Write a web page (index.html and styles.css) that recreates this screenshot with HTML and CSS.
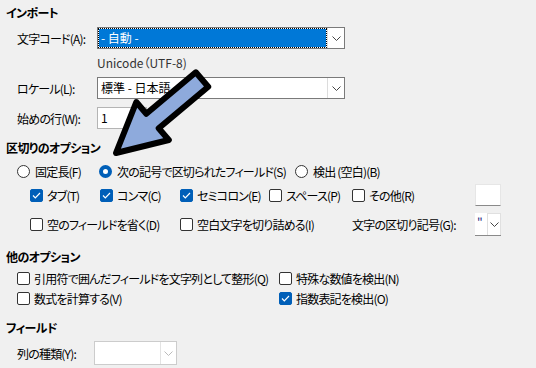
FILE: index.html
```html
<!DOCTYPE html>
<html lang="ja">
<head>
    <meta charset="UTF-8">
    <title>テキストのインポート</title>
    <link rel="stylesheet" href="styles.css">
</head>
<body>
    <div class="dialog">
        <div class="group-title t-import">インポート</div>
        <div class="frow r-charset">
            <span class="lbl">文字コード(A):</span>
            <div class="combo">
                <span class="combo-text focused">- 自動 -</span>
                <span class="combo-btn"><svg width="9" height="5" viewBox="0 0 9 5"><polyline points="0.5,0.5 4.5,4.5 8.5,0.5" fill="none" stroke="#444" stroke-width="1"/></svg></span>
            </div>
        </div>
        <div class="hint">Unicode（UTF-8)</div>
        <div class="frow">
            <span class="lbl">ロケール(L):</span>
            <div class="combo">
                <span class="combo-text">標準 - 日本語</span>
                <span class="combo-btn"><svg width="9" height="5" viewBox="0 0 9 5"><polyline points="0.5,0.5 4.5,4.5 8.5,0.5" fill="none" stroke="#444" stroke-width="1"/></svg></span>
            </div>
        </div>
        <div class="frow r-start">
            <span class="lbl">始めの行(W):</span>
            <div class="spin">1</div>
        </div>

        <div class="group-title t-sep">区切りのオプション</div>
        <div class="radios">
            <label class="opt"><span class="radio"></span>固定長(F)</label>
            <label class="opt"><span class="radio on"></span>次の記号で区切られたフィールド(S)</label>
            <label class="opt"><span class="radio"></span>検出 (空白)(B)</label>
        </div>
        <div class="seps">
            <label class="opt"><span class="cb on"><svg width="9" height="7" viewBox="0 0 9 7"><polyline points="1,3.5 3.3,5.8 8,1" fill="none" stroke="#fff" stroke-width="1.2"/></svg></span>タブ(T)</label>
            <label class="opt"><span class="cb on"><svg width="9" height="7" viewBox="0 0 9 7"><polyline points="1,3.5 3.3,5.8 8,1" fill="none" stroke="#fff" stroke-width="1.2"/></svg></span>コンマ(C)</label>
            <label class="opt"><span class="cb on"><svg width="9" height="7" viewBox="0 0 9 7"><polyline points="1,3.5 3.3,5.8 8,1" fill="none" stroke="#fff" stroke-width="1.2"/></svg></span>セミコロン(E)</label>
            <label class="opt"><span class="cb"></span>スペース(P)</label>
            <label class="opt"><span class="cb"></span>その他(R)</label>
            <div class="textbox"></div>

            <label class="opt span2"><span class="cb"></span>空のフィールドを省く(D)</label>
            <label class="opt span2"><span class="cb"></span>空白文字を切り詰める(I)</label>
            <span class="opt">文字の区切り記号(G):</span>
            <div class="quote-combo">
                <span class="quote">"</span>
                <span class="quote-btn"><svg width="9" height="5" viewBox="0 0 9 5"><polyline points="0.5,0.5 4.5,4.5 8.5,0.5" fill="none" stroke="#444" stroke-width="1"/></svg></span>
            </div>
        </div>

        <div class="group-title t-other">他のオプション</div>
        <div class="others">
            <label class="opt"><span class="cb"></span>引用符で囲んだフィールドを文字列として整形(Q)</label>
            <label class="opt"><span class="cb"></span>特殊な数値を検出(N)</label>
            <label class="opt"><span class="cb"></span>数式を計算する(V)</label>
            <label class="opt"><span class="cb on"><svg width="9" height="7" viewBox="0 0 9 7"><polyline points="1,3.5 3.3,5.8 8,1" fill="none" stroke="#fff" stroke-width="1.2"/></svg></span>指数表記を検出(O)</label>
        </div>

        <div class="group-title t-field">フィールド</div>
        <div class="frow r-field">
            <span class="lbl lbl-short">列の種類(Y):</span>
            <div class="combo combo-off">
                <span class="combo-text"></span>
                <span class="combo-btn"><svg width="9" height="5" viewBox="0 0 9 5"><polyline points="0.5,0.5 4.5,4.5 8.5,0.5" fill="none" stroke="#bbb" stroke-width="1"/></svg></span>
            </div>
        </div>
    </div>

    <!-- 注釈の矢印 -->
    <svg class="arrow" width="536" height="368" viewBox="0 0 536 368">
        <polygon points="116,153 136.3,102 146.3,113.8 195.8,72.3 208.2,86.7 158.7,128.2 168.8,140"
                 fill="#8eaadc" stroke="#000" stroke-width="6" stroke-linejoin="round"/>
    </svg>
</body>
</html>
```

FILE: styles.css
```css
body {
    margin: 0;
    background: #f0f0f0;
    font-family: "Noto Sans CJK JP", "Noto Sans", sans-serif;
    font-size: 12px;
    font-feature-settings: "palt";
    letter-spacing: -0.8px;
    color: #000;
    width: 536px;
    height: 368px;
    overflow: hidden;
    position: relative;
}
.dialog {
    display: flex;
    flex-direction: column;
}
.group-title {
    height: 18px;
    line-height: 18px;
    padding-left: 6px;
    font-weight: bold;
    letter-spacing: -0.6px;
}
.t-import { margin-top: 4px; }
.t-sep { margin-top: 10px; }
.t-other { margin-top: 12px; }
.t-field { margin-top: 11px; }

.frow {
    display: flex;
    align-items: center;
    height: 22px;
    padding-left: 17px;
}
.r-charset { margin-top: 5px; }
.r-start { margin-top: 8px; }
.r-field { margin-top: 5px; }
.lbl {
    width: 80px;
}
.lbl-short {
    width: 77px;
}
.hint {
    height: 28px;
    line-height: 28px;
    padding-left: 97px;
    color: #333;
    letter-spacing: 0;
}

/* コンボボックス */
.combo {
    display: flex;
    box-sizing: border-box;
    width: 248px;
    height: 22px;
    border: 1px solid #7a7a7a;
    background: #fff;
}
.combo-text {
    flex: 1;
    line-height: 20px;
    padding-left: 3px;
    letter-spacing: 0;
}
.combo-text.focused {
    background: #0078d7;
    background-clip: padding-box;
    color: #fff;
    border: 1px dotted #000;
    line-height: 18px;
    padding-left: 2px;
}
.combo-btn {
    width: 16px;
    display: flex;
    align-items: center;
    justify-content: center;
    border-left: 1px solid #dcdcdc;
}
.combo-off {
    width: 83px;
    height: 24px;
    border-color: #cccccc;
}
.combo-off .combo-btn {
    width: 15px;
    border-left-color: #e3e3e3;
}
.spin {
    box-sizing: border-box;
    width: 50px;
    height: 22px;
    line-height: 20px;
    padding-left: 3px;
    background: #fff;
    border: 1px solid #b4b4b4;
}

/* オプション */
.opt {
    display: flex;
    align-items: center;
    white-space: nowrap;
}
.radio {
    flex-shrink: 0;
    box-sizing: border-box;
    width: 13px;
    height: 13px;
    border: 1px solid #333;
    border-radius: 50%;
    background: #fff;
    margin-right: 5px;
}
.radio.on {
    border: 4px solid #005fb8;
}
.cb {
    flex-shrink: 0;
    box-sizing: border-box;
    width: 13px;
    height: 13px;
    border: 1px solid #333;
    border-radius: 2px;
    background: #fff;
    margin-right: 4px;
    display: flex;
    align-items: center;
    justify-content: center;
}
.cb.on {
    background: #005fb8;
    border-color: #005fb8;
}

.radios {
    display: grid;
    grid-template-columns: 82px 196px auto;
    height: 20px;
    margin-top: 4px;
    padding-left: 17px;
}
.seps {
    display: grid;
    grid-template-columns: 70px 80px 89px 83px 123px 26px;
    grid-template-rows: 22px 23px;
    row-gap: 7px;
    margin-top: 3px;
    padding-left: 30px;
}
.span2 {
    grid-column: span 2;
}
.textbox {
    box-sizing: border-box;
    height: 22px;
    background: #fff;
    border: 1px solid #e6e6e6;
    border-bottom-color: #8a8a8a;
}
.quote-combo {
    display: flex;
    box-sizing: border-box;
    height: 23px;
    background: #fff;
    border-bottom: 1px solid #8a8a8a;
}
.quote {
    width: 10px;
    line-height: 20px;
    padding-left: 2px;
    color: #2a2a80;
}
.quote-btn {
    flex: 1;
    display: flex;
    align-items: center;
    justify-content: center;
    border: 1px solid #e0e0e0;
    border-bottom: none;
}
.others {
    display: grid;
    grid-template-columns: 262px auto;
    grid-auto-rows: 20px;
    margin-top: 2px;
    padding-left: 17px;
}

.arrow {
    position: absolute;
    top: 0;
    left: 0;
    pointer-events: none;
}
```
